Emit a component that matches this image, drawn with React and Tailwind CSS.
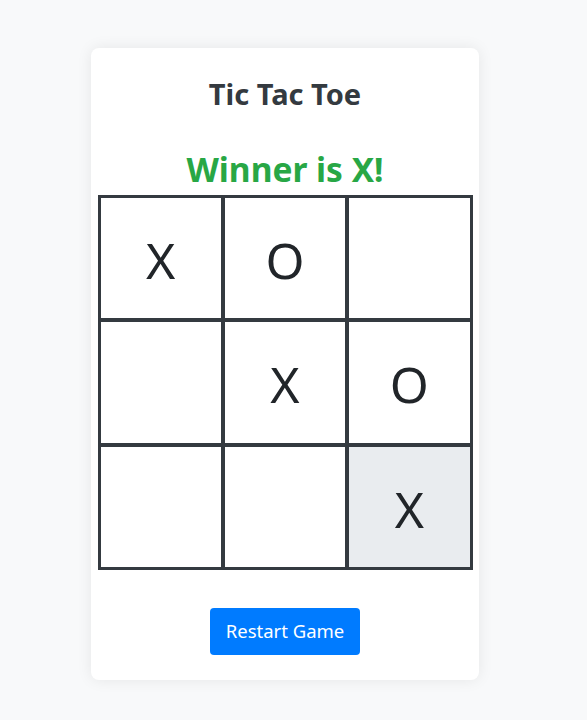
import React from "react";

const board = ["X", "O", "", "", "X", "O", "", "", "X"];

export default function App() {
  return (
    <div
      className="min-h-[720px] bg-[#f8f9fa] pt-[48px]"
      style={{ fontFamily: '"Noto Sans", "Open Sans", sans-serif' }}
    >
      <div className="ml-[91px] flex w-[388px] flex-col items-center rounded-lg bg-white pb-[25px] pt-[29px] shadow-[0_0_15px_rgba(0,0,0,0.08)]">
        <h3 className="text-[29px] font-bold leading-[1.2] text-[#343a40]">
          Tic Tac Toe
        </h3>
        <h2 className="mt-[37px] text-[33.5px] font-bold leading-[1.2] text-[#28a745]">
          Winner is X!
        </h2>
        <div className="mt-[6px] grid h-[375px] w-[375px] grid-cols-3 grid-rows-3 border border-[#343a40]">
          {board.map((v, i) => (
            <div
              key={i}
              className={`flex items-center justify-center border-2 border-[#343a40] pt-[4px] text-[50px] leading-none text-[#212529] ${
                i === 8 ? "bg-[#e9ecef]" : "bg-white"
              }`}
            >
              {v}
            </div>
          ))}
        </div>
        <button className="mt-[38px] flex h-[47px] w-[150px] items-center justify-center rounded-[4px] bg-[#007bff] text-[18.5px] leading-none text-white">
          Restart Game
        </button>
      </div>
    </div>
  );
}
